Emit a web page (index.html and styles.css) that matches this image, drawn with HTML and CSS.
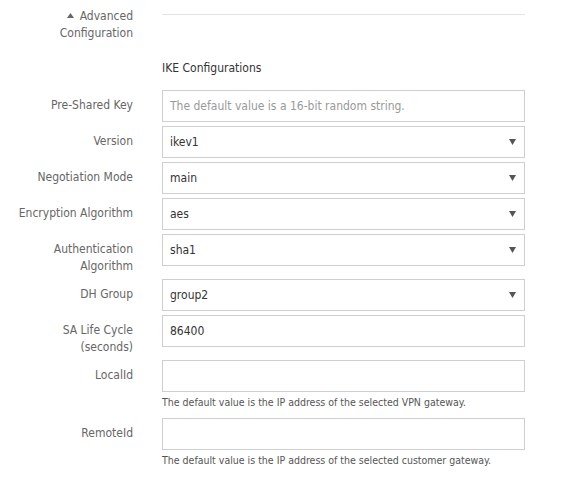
FILE: index.html
```html
<!DOCTYPE html>
<html>
<head>
<meta charset="utf-8">
<link rel="stylesheet" href="styles.css">
</head>
<body>
<div class="form">
  <div class="row header-row">
    <div class="label adv"><span class="tri"><svg width="7" height="5" viewBox="0 0 7 5"><path d="M0 5 L3.5 0 L7 5 Z" fill="#666"/></svg></span> Advanced<br>Configuration</div>
    <div class="field"><div class="rule"></div></div>
  </div>
  <div class="row title-row">
    <div class="label"></div>
    <div class="field section-title">IKE Configurations</div>
  </div>
  <div class="row">
    <div class="label">Pre-Shared Key</div>
    <div class="field"><input class="input" type="text" placeholder="The default value is a 16-bit random string."></div>
  </div>
  <div class="row">
    <div class="label">Version</div>
    <div class="field"><div class="select"><span>ikev1</span><svg class="arrow" width="7" height="6" viewBox="0 0 7 6"><path d="M0 0 H7 L3.5 6 Z" fill="#555"/></svg></div></div>
  </div>
  <div class="row">
    <div class="label">Negotiation Mode</div>
    <div class="field"><div class="select"><span>main</span><svg class="arrow" width="7" height="6" viewBox="0 0 7 6"><path d="M0 0 H7 L3.5 6 Z" fill="#555"/></svg></div></div>
  </div>
  <div class="row">
    <div class="label">Encryption Algorithm</div>
    <div class="field"><div class="select"><span>aes</span><svg class="arrow" width="7" height="6" viewBox="0 0 7 6"><path d="M0 0 H7 L3.5 6 Z" fill="#555"/></svg></div></div>
  </div>
  <div class="row">
    <div class="label">Authentication<br>Algorithm</div>
    <div class="field"><div class="select"><span>sha1</span><svg class="arrow" width="7" height="6" viewBox="0 0 7 6"><path d="M0 0 H7 L3.5 6 Z" fill="#555"/></svg></div></div>
  </div>
  <div class="row">
    <div class="label">DH Group</div>
    <div class="field"><div class="select"><span>group2</span><svg class="arrow" width="7" height="6" viewBox="0 0 7 6"><path d="M0 0 H7 L3.5 6 Z" fill="#555"/></svg></div></div>
  </div>
  <div class="row">
    <div class="label">SA Life Cycle<br>(seconds)</div>
    <div class="field"><input class="input" type="text" value="86400"></div>
  </div>
  <div class="row">
    <div class="label">LocalId</div>
    <div class="field"><input class="input" type="text"><div class="help">The default value is the IP address of the selected VPN gateway.</div></div>
  </div>
  <div class="row">
    <div class="label">RemoteId</div>
    <div class="field"><input class="input" type="text"><div class="help">The default value is the IP address of the selected customer gateway.</div></div>
  </div>
</div>
</body>
</html>
```

FILE: styles.css
```css
* { box-sizing: border-box; }
html, body { margin: 0; padding: 0; background: #fff; }
body {
  font-family: "DejaVu Sans Condensed", "DejaVu Sans", sans-serif;
  font-size: 12px;
  color: #333;
}
.form {
  padding-top: 8px;
  width: 525px;
}
.row {
  display: grid;
  grid-template-columns: 133px 363px;
  column-gap: 29px;
  margin-bottom: 4px;
}
.label {
  text-align: right;
  color: #666;
  line-height: 17px;
  padding-top: 7px;
}
.header-row .label { padding-top: 0; }
.header-row { margin-bottom: 0; height: 34px; }
.tri { display: inline-block; vertical-align: 2px; margin-right: 2px; }
.tri svg { display: block; }
.rule {
  margin-top: 6px;
  border-top: 1px solid #e3e3e3;
}
.title-row { margin-bottom: 0; height: 48px; }
.section-title {
  padding-top: 18px;
  line-height: 17px;
  color: #333;
}
.input, .select {
  display: block;
  width: 363px;
  height: 32px;
  border: 1px solid #cfcfcf;
  padding: 0 7px;
  font-family: inherit;
  font-size: 12px;
  color: #333;
  background: #fff;
  outline: none;
  margin: 0;
}
.input::placeholder { color: #999; }
.select {
  display: flex;
  align-items: center;
  justify-content: space-between;
  padding-right: 8px;
}
.arrow { display: block; }
.help {
  font-size: 10.5px;
  color: #555;
  line-height: 16px;
  padding-top: 2px;
  padding-bottom: 4px;
}
```
